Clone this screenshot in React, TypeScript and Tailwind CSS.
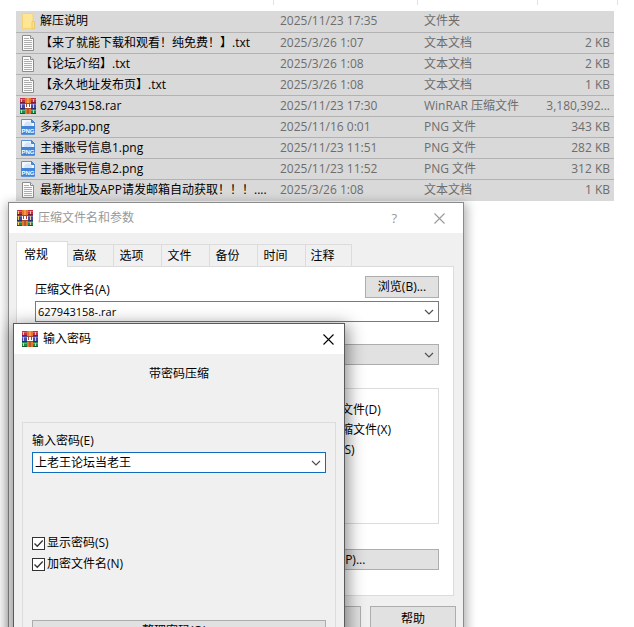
import type { ReactNode } from "react";

type FileKind = "folder" | "txt" | "rar" | "png";

interface FileRow {
  name: string;
  date: string;
  type: string;
  size: string;
  kind: FileKind;
}

const files: FileRow[] = [
  { name: "解压说明", date: "2025/11/23 17:35", type: "文件夹", size: "", kind: "folder" },
  { name: "【来了就能下载和观看！纯免费！】.txt", date: "2025/3/26 1:07", type: "文本文档", size: "2 KB", kind: "txt" },
  { name: "【论坛介绍】.txt", date: "2025/3/26 1:08", type: "文本文档", size: "2 KB", kind: "txt" },
  { name: "【永久地址发布页】.txt", date: "2025/3/26 1:08", type: "文本文档", size: "1 KB", kind: "txt" },
  { name: "627943158.rar", date: "2025/11/23 17:30", type: "WinRAR 压缩文件", size: "3,180,392...", kind: "rar" },
  { name: "多彩app.png", date: "2025/11/16 0:01", type: "PNG 文件", size: "343 KB", kind: "png" },
  { name: "主播账号信息1.png", date: "2025/11/23 11:51", type: "PNG 文件", size: "282 KB", kind: "png" },
  { name: "主播账号信息2.png", date: "2025/11/23 11:52", type: "PNG 文件", size: "312 KB", kind: "png" },
  { name: "最新地址及APP请发邮箱自动获取！！！....", date: "2025/3/26 1:08", type: "文本文档", size: "1 KB", kind: "txt" },
];

const tabs = [
  { label: "高级", width: "w-[46px]" },
  { label: "选项", width: "w-12" },
  { label: "文件", width: "w-12" },
  { label: "备份", width: "w-12" },
  { label: "时间", width: "w-12" },
  { label: "注释", width: "w-[46px]" },
];

const RarIcon = () => (
  <svg className="size-4 shrink-0" viewBox="0 0 16 16" shapeRendering="crispEdges" aria-hidden="true">
    <rect width="16" height="5" fill="#c22f45" />
    <rect y="1" width="16" height="1" fill="#dd5a68" />
    <rect y="4" width="16" height="1" fill="#7d1c31" />
    <rect y="5" width="16" height="6" fill="#4648a8" />
    <rect y="6" width="16" height="1" fill="#7073cc" />
    <rect y="10" width="16" height="1" fill="#2a2a6c" />
    <rect y="11" width="16" height="5" fill="#23894b" />
    <rect y="12" width="16" height="1" fill="#4fb073" />
    <rect y="15" width="16" height="1" fill="#155a30" />
    <path d="M1 1h1v3H1zM1 6h1v4H1zM1 12h1v3H1z" fill="#f0d668" />
    <path d="M13 1h1v3h-1zM13 6h1v4h-1zM13 12h1v3h-1z" fill="#e5c9a0" />
    <rect x="5" width="6" height="16" fill="#e5752b" />
    <rect x="7" width="2" height="5" fill="#f39a4a" />
    <rect x="5" y="5" width="6" height="6" fill="#a8452c" />
    <path d="M5 6h1v3h1V6h2v3h1V6h1v4H5z" fill="#fff" />
    <rect x="7" y="11" width="2" height="5" fill="#b5592a" />
  </svg>
);

const FolderIcon = () => (
  <svg className="size-4 shrink-0" viewBox="0 0 16 16" aria-hidden="true">
    <path d="M2.5.5h10.500v15h-10.500z" fill="#ffe694" stroke="#f5d274" />
    <path d="M12 8.500h2.500v7H12z" fill="#ffe08a" stroke="#e9c45e" strokeWidth="0.8" />
  </svg>
);

const TextIcon = () => (
  <svg className="size-4 shrink-0" viewBox="0 0 16 16" aria-hidden="true">
    <path d="M2.500.500h8l3 3v12h-11z" fill="#fbfbfb" stroke="#8c8c8c" />
    <path d="M10.500.500v3h3" fill="#e6e6e6" stroke="#8c8c8c" />
    <path d="M4 3.500h5M4 5.500h8M4 7.500h8M4 9.500h8M4 11.500h8M4 13.500h8" stroke="#a4a4a4" strokeWidth="0.9" />
  </svg>
);

const PngIcon = () => (
  <svg className="size-4 shrink-0" viewBox="0 0 16 16" aria-hidden="true">
    <path d="M1.500.500h10l3 3v12h-13z" fill="#f1f7ff" stroke="#5b93d6" />
    <path d="M4 7c0-2.500 1.500-4.500 4.500-4.500C11 2.500 12 5 12 7z" fill="#d3e5fb" />
    <path d="M11.500.500v3h3z" fill="#5b93dc" stroke="#4a80c4" />
    <rect x="1" y="7" width="14" height="8" fill="#4384d6" />
    <text
      x="8"
      y="13.500"
      textAnchor="middle"
      fill="#fff"
      className="font-['Liberation_Sans'] text-[6px] font-bold"
    >
      PNG
    </text>
  </svg>
);

const FileIcon = ({ kind }: { kind: FileKind }) => {
  if (kind === "folder") return <FolderIcon />;
  if (kind === "rar") return <RarIcon />;
  if (kind === "png") return <PngIcon />;
  return <TextIcon />;
};

const Chevron = () => (
  <svg className="h-[6px] w-[10px]" viewBox="0 0 10 6" fill="none" stroke="#505050" strokeWidth="1.2" aria-hidden="true">
    <path d="M1 1l4 4 4-4" />
  </svg>
);

const CloseIcon = () => (
  <svg className="size-[11px]" viewBox="0 0 11 11" fill="none" stroke="currentColor" strokeWidth="1.1" aria-hidden="true">
    <path d="M.5.5l10 10M10.500.500l-10 10" />
  </svg>
);

const CheckBox = ({ label, checked = false }: { label: string; checked?: boolean }) => (
  <label className="flex items-center gap-[2px] whitespace-nowrap">
    <span className="grid shrink-0">
      <input
        type="checkbox"
        defaultChecked={checked}
        className="peer col-start-1 row-start-1 size-[13px] appearance-none border border-[#333] bg-white"
      />
      <svg
        className="pointer-events-none invisible col-start-1 row-start-1 size-[13px] peer-checked:visible"
        viewBox="0 0 13 13"
        fill="none"
        stroke="#333"
        strokeWidth="1.3"
        aria-hidden="true"
      >
        <path d="M2.500 6.500l2.800 2.800 5.400-5.800" />
      </svg>
    </span>
    {label}
  </label>
);

const PushButton = ({ children, className }: { children: ReactNode; className: string }) => (
  <button type="button" className={`border border-[#adadad] bg-[#e1e1e1] whitespace-nowrap ${className}`}>
    {children}
  </button>
);

const FileList = () => (
  <div className="pr-5 pl-4">
    <div className="-mr-1 flex h-[11px] items-start" aria-hidden="true">
      <span className="h-[5px] w-[258px] shrink-0 border-r border-[#e3e3e3]" />
      <span className="h-[5px] w-36 shrink-0 border-r border-[#e3e3e3]" />
      <span className="h-[5px] w-[120px] shrink-0 border-r border-[#e3e3e3]" />
      <span className="h-[5px] grow border-r border-[#e3e3e3]" />
    </div>
    <table className="w-full table-fixed border-collapse bg-[#d9d9d9] text-[#6d6d6d]">
      <colgroup>
        <col className="w-[264px]" />
        <col className="w-36" />
        <col className="w-[114px]" />
        <col />
      </colgroup>
      <tbody>
        {files.map((file) => (
          <tr key={file.name} className="h-[21px] border-b border-[#b2b2b2] whitespace-nowrap last:border-[#d9d9d9]">
            <td className="p-0 pl-1 text-black">
              <span className="flex items-center gap-1">
                <FileIcon kind={file.kind} />
                {file.name}
              </span>
            </td>
            <td className="p-0">{file.date}</td>
            <td className="p-0">{file.type}</td>
            <td className="p-0 pr-1 text-right">{file.size}</td>
          </tr>
        ))}
      </tbody>
    </table>
  </div>
);

const ArchiveDialog = () => (
  <section
    aria-label="压缩文件名和参数"
    className="absolute top-[202px] left-2 w-[456px] border border-[#8a8a8a] bg-[#f0f0f0] shadow-[1px_3px_10px_2px_rgba(0,0,0,0.3)]"
  >
    <header className="flex h-[30px] items-center gap-[5px] bg-white pr-[18px] pl-2 text-[#999]">
      <RarIcon />
      <h2 className="grow">压缩文件名和参数</h2>
      <button type="button" aria-label="帮助主题" className="mr-8 text-[13px]">
        ?
      </button>
      <button type="button" aria-label="关闭">
        <CloseIcon />
      </button>
    </header>

    <div className="pt-2 pr-[9px] pl-[7px]">
      <div role="tablist" className="flex items-end">
        <button
          type="button"
          role="tab"
          aria-selected="true"
          className="-mb-px h-[26px] w-[52px] border border-b-0 border-[#dcdcdc] bg-white pr-3"
        >
          常规
        </button>
        {tabs.map((tab) => (
          <button
            key={tab.label}
            type="button"
            role="tab"
            aria-selected="false"
            className={`h-[22px] border-t border-r border-[#dcdcdc] pr-3 ${tab.width}`}
          >
            {tab.label}
          </button>
        ))}
      </div>
      <div role="tabpanel" className="h-[330px] border border-[#dcdcdc] bg-white pt-[9px] pr-[14px] pl-[18px]">
        <div className="flex items-end justify-between">
          <label htmlFor="archive-name" className="leading-4">
            压缩文件名(A)
          </label>
          <PushButton className="h-[22px] w-[74px]">浏览(B)...</PushButton>
        </div>
        <div className="mt-[3px] flex h-[21px] items-center border border-[#7a7a7a] pr-1">
          <input
            id="archive-name"
            defaultValue="627943158-.rar"
            className="min-w-0 grow bg-transparent pl-[2px] text-[11px] outline-none"
          />
          <button type="button" aria-label="历史记录">
            <Chevron />
          </button>
        </div>
        <div className="mt-[22px] grid h-[21px] items-center border border-[#adadad] bg-[#e1e1e1]">
          <select aria-label="默认配置" className="col-start-1 row-start-1 h-full w-full appearance-none" />
          <span className="pointer-events-none col-start-1 row-start-1 justify-self-end pr-1">
            <Chevron />
          </span>
        </div>
        <fieldset className="mt-[23px] ml-[184px] flex h-[136px] flex-col gap-1 border border-[#dcdcdc] pt-[13px] pl-[10px]">
          <CheckBox label="压缩后删除原来的文件(D)" />
          <CheckBox label="创建自解压格式压缩文件(X)" />
          <CheckBox label="创建固实压缩文件(S)" />
        </fieldset>
        <div className="mt-[25px] flex justify-end">
          <PushButton className="h-[21px] w-[219px]">设置密码(P)...</PushButton>
        </div>
      </div>
    </div>

    <footer className="flex justify-end gap-[9px] pt-[10px] pr-[7px] pb-3">
      <PushButton className="h-[26px] w-[86px]">取消</PushButton>
      <PushButton className="h-[26px] w-[86px]">帮助</PushButton>
    </footer>
  </section>
);

const PasswordDialog = () => (
  <section
    aria-label="输入密码"
    className="absolute top-[323px] left-[13px] w-[332px] border border-[#5a5a5a] bg-[#f0f0f0] shadow-[1px_4px_16px_2px_rgba(0,0,0,0.45)]"
  >
    <header className="flex h-[30px] items-center gap-[5px] bg-white pr-[10px] pl-2">
      <RarIcon />
      <h2 className="grow">输入密码</h2>
      <button type="button" aria-label="关闭">
        <CloseIcon />
      </button>
    </header>
    <p className="pt-3 text-center leading-4">带密码压缩</p>
    <div className="px-2 pt-10 pb-3">
      <div className="border border-[#dcdcdc] px-[9px] pt-[10px] pb-3">
        <label htmlFor="password" className="block leading-4">
          输入密码(E)
        </label>
        <div className="mt-[3px] flex h-[21px] items-center border border-[#0f6cbd] bg-white pr-1">
          <input
            id="password"
            defaultValue="上老王论坛当老王"
            className="min-w-0 grow bg-transparent pl-[2px] outline-none"
          />
          <button type="button" aria-label="已保存的密码">
            <Chevron />
          </button>
        </div>
        <div className="flex flex-col gap-[5px] pt-[62px]">
          <CheckBox label="显示密码(S)" checked />
          <CheckBox label="加密文件名(N)" checked />
        </div>
        <PushButton className="mt-12 h-[22px] w-full">整理密码(O)...</PushButton>
      </div>
    </div>
  </section>
);

const App = () => {
  return (
    <main className="relative h-screen overflow-hidden bg-white font-['Open_Sans','Noto_Sans_CJK_SC',sans-serif] text-[12px] leading-4 text-black [text-spacing-trim:space-all]">
      <FileList />
      <ArchiveDialog />
      <PasswordDialog />
    </main>
  );
};

export default App;
